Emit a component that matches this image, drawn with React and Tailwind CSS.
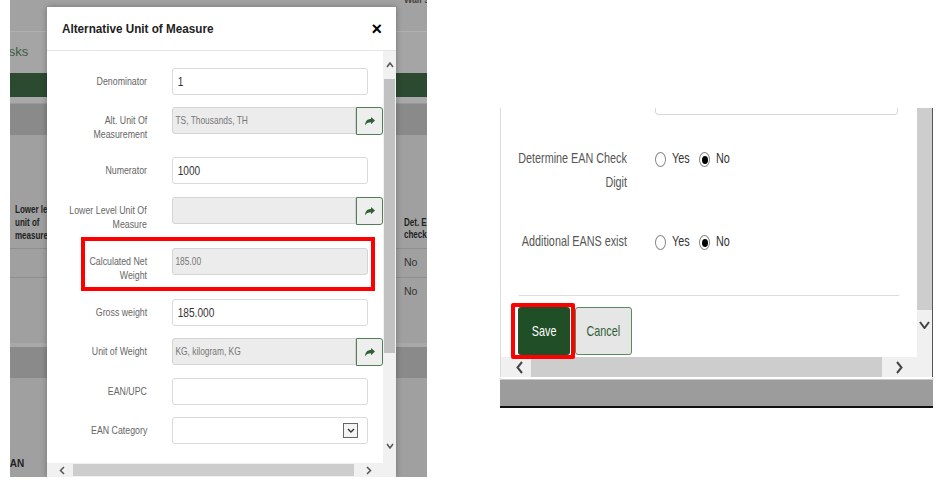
import React from 'react';

const ShareIcon = () => (
  <svg width="10" height="9" viewBox="0 0 10 9">
    <path d="M10 3.6 L6 0 V2 C2.5 2 0.3 4 0 8.5 C1.2 6 3.2 5.3 6 5.3 V7.3 Z" fill="#2f5f33" />
  </svg>
);

const Chevron = ({ dir, w = 8, h = 6, stroke = '#555', sw = 1.5 }) => {
  const paths = {
    up: `M1 ${h - 1} L${w / 2} 1 L${w - 1} ${h - 1}`,
    down: `M1 1 L${w / 2} ${h - 1} L${w - 1} 1`,
    left: `M${w - 1} 1 L1.5 ${h / 2} L${w - 1} ${h - 1}`,
    right: `M1 1 L${w - 1.5} ${h / 2} L1 ${h - 1}`,
  };
  return (
    <svg width={w} height={h} viewBox={`0 0 ${w} ${h}`}>
      <path d={paths[dir]} stroke={stroke} strokeWidth={sw} fill="none" />
    </svg>
  );
};

const Label = ({ lines, w = 'w-[100px]' }) => (
  <div className={`${w} flex shrink-0 flex-col items-end pt-[6px] text-[11px] leading-[14px] text-[#666]`}>
    {lines.map((l) => (
      <span key={l} className="block whitespace-nowrap scale-x-[0.8] origin-right">
        {l}
      </span>
    ))}
  </div>
);

const Field = ({ value = '', disabled, btn, select }) => (
  <div className="ml-[25px] flex shrink-0">
    <div
      className={`${btn ? 'w-[184px] rounded-l-[3px]' : 'w-[196px] rounded-[3px]'} ${
        disabled ? 'border-[#d4d4d4] bg-[#ececec]' : 'border-[#dadada] bg-white'
      } flex h-[27px] items-center justify-between overflow-hidden border`}
    >
      {disabled ? (
        <span className="block whitespace-nowrap pl-[3px] text-[10.5px] text-[#777] scale-x-[0.8] origin-left">
          {value}
        </span>
      ) : (
        <span className="block whitespace-nowrap pl-[6px] text-[13px] text-[#333] scale-x-[0.78] origin-left">
          {value}
        </span>
      )}
      {select && (
        <div className="mr-[9px] flex h-[15px] w-[15px] items-center justify-center border border-[#666] bg-[#f4f4f4]">
          <Chevron dir="down" w={8} h={5} stroke="#333" sw={1.4} />
        </div>
      )}
    </div>
    {btn && (
      <div className="flex h-[28px] w-[27px] items-center justify-center rounded-r-[3px] border border-[#4f7f52] bg-[#eeeeee]">
        <ShareIcon />
      </div>
    )}
  </div>
);

const topRows = [
  { label: ['Denominator'], value: '1', h: 'h-[39px]' },
  { label: ['Alt. Unit Of', 'Measurement'], value: 'TS, Thousands, TH', disabled: true, btn: true, h: 'h-[50px]' },
  { label: ['Numerator'], value: '1000', h: 'h-[40px]' },
  { label: ['Lower Level Unit Of', 'Measure'], value: '', disabled: true, btn: true, h: 'h-[40px]' },
];

const bottomRows = [
  { label: ['Gross weight'], value: '185.000', h: 'h-[39px]' },
  { label: ['Unit of Weight'], value: 'KG, kilogram, KG', disabled: true, btn: true, h: 'h-[40px]' },
  { label: ['EAN/UPC'], value: '', h: 'h-[39px]' },
  { label: ['EAN Category'], value: '', select: true, h: 'h-[40px]' },
];

const Row = ({ r }) => (
  <div className={`flex ${r.h}`}>
    <Label lines={r.label} />
    <Field value={r.value} disabled={r.disabled} btn={r.btn} select={r.select} />
  </div>
);

const Radio = ({ checked }) => (
  <span className="mt-[6px] flex h-[15px] w-[11px] shrink-0 items-center justify-center rounded-[50%] border border-[#8a8a8a] bg-white">
    {checked && <span className="h-[8px] w-[6px] rounded-[50%] bg-black" />}
  </span>
);

const RadioGroup = () => (
  <div className="ml-[28px] flex items-start text-[15px] leading-[24px] text-[#333]">
    <Radio />
    <span className="ml-[6px] inline-block w-[19px] whitespace-nowrap scale-x-[0.72] origin-left">Yes</span>
    <span className="ml-[8px]">
      <Radio checked />
    </span>
    <span className="ml-[6px] inline-block w-[14px] whitespace-nowrap scale-x-[0.72] origin-left">No</span>
  </div>
);

const RightLabel = ({ lines }) => (
  <div className="flex w-[126px] shrink-0 flex-col items-end text-[15px] leading-[24px] text-[#555]">
    {lines.map((l) => (
      <span key={l} className="block whitespace-nowrap scale-x-[0.72] origin-right">
        {l}
      </span>
    ))}
  </div>
);

export default function App() {
  return (
    <div className="flex h-[488px] w-[951px] items-start overflow-hidden bg-white font-['Liberation_Sans',Arial,sans-serif]">
      {/* left screenshot */}
      <div className="relative ml-[10px] flex h-[477px] w-[417px] shrink-0 flex-col overflow-hidden bg-[#a0a0a0]">
        <div className="h-[31px] bg-[#a2a2a2]">
          <div className="ml-auto -mt-[9px] w-[23px] whitespace-nowrap text-[11px] font-bold text-[#444]">
            <span className="block scale-x-[0.8] origin-left">Wall s</span>
          </div>
        </div>
        <div className="h-px bg-[#b0b0b0]" />
        <div className="h-[41px] bg-[#a5a5a5] pt-[13px]">
          <span className="-ml-[15px] block text-[13px] leading-[14px] text-[#3d5c3f]">Tasks</span>
        </div>
        <div className="h-[24px] bg-[#2c4a30]" />
        <div className="h-[7px] border-b border-[#999] bg-[#a9a9a9]" />
        <div className="h-[31px] bg-[#8a8a8a]" />
        <div className="flex h-[113px] items-end justify-between">
          <div className="ml-[5px] whitespace-nowrap pb-[6px] text-[10px] font-bold leading-[13px] text-[#222]">
            <span className="block scale-x-[0.8] origin-left">Lower level</span>
            <span className="block scale-x-[0.8] origin-left">unit of</span>
            <span className="block scale-x-[0.8] origin-left">measure</span>
          </div>
          <div className="w-[23px] whitespace-nowrap pb-[7px] text-[10px] font-bold leading-[12px] text-[#222]">
            <span className="block scale-x-[0.8] origin-left">Det. EAN</span>
            <span className="block scale-x-[0.8] origin-left">check</span>
          </div>
        </div>
        {['No', 'No'].map((t, i) => (
          <div key={i} className="flex h-[29px] items-center justify-end border-t border-[#8f8f8f]">
            <span className="w-[23px] text-[10.5px] text-[#333]">{t}</span>
          </div>
        ))}
        <div className="h-[37px]" />
        <div className="h-[4px] bg-[#a8a8a8]" />
        <div className="h-[31px] bg-[#8a8a8a]" />
        <div className="flex-1 pt-[80px]">
          <span className="-ml-[7px] block text-[10px] font-bold leading-[12px] text-[#222]">EAN</span>
        </div>

        {/* modal */}
        <div className="absolute left-[37px] top-[7px] flex h-[470px] w-[349px] flex-col bg-white shadow-[0_0_6px_rgba(0,0,0,0.3)]">
          <div className="flex h-[44px] shrink-0 items-center justify-between border-b border-[#e5e5e5] pl-[15px] pr-[14px]">
            <span className="block whitespace-nowrap text-[13px] font-bold text-[#222] scale-x-[0.9] origin-left">
              Alternative Unit of Measure
            </span>
            <span className="text-[18px] font-bold leading-none text-black">×</span>
          </div>
          <div className="flex h-[412px] shrink-0">
            <div className="w-[336px] overflow-hidden pt-[17px]">
              {topRows.map((r) => (
                <Row key={r.label[0]} r={r} />
              ))}
              <div className="mb-[8px] ml-[34px] flex h-[54px] w-[294px] border-[4px] border-[#ff0000] pt-[7px]">
                <Label lines={['Calculated Net', 'Weight']} w="w-[62px]" />
                <Field value="185.00" disabled />
              </div>
              {bottomRows.map((r) => (
                <Row key={r.label[0]} r={r} />
              ))}
            </div>
            <div className="flex w-[13px] flex-col bg-[#f1f1f1]">
              <div className="flex h-[28px] justify-center pt-[11px]">
                <Chevron dir="up" w={8} h={6} />
              </div>
              <div className="mx-[1px] h-[274px] bg-[#c1c1c1]" />
              <div className="flex flex-1 justify-center pt-[90px]">
                <Chevron dir="down" w={8} h={6} />
              </div>
            </div>
          </div>
          <div className="flex h-[14px] shrink-0 bg-[#f1f1f1]">
            <div className="flex w-[26px] items-center justify-center pl-[4px]">
              <Chevron dir="left" w={6} h={9} />
            </div>
            <div className="my-[1px] w-[281px] bg-[#cdcdcd]" />
            <div className="flex w-[29px] items-center justify-center">
              <Chevron dir="right" w={6} h={9} />
            </div>
          </div>
        </div>
      </div>

      {/* right screenshot */}
      <div className="ml-[73px] mt-[108px] w-[433px] shrink-0">
        <div className="flex h-[249px]">
          <div className="w-[417px] border-l border-[#dcdcdc] bg-white">
            <div className="ml-[154px] h-[7px] w-[243px] rounded-b-[4px] border border-t-0 border-[#d8d8d8]" />
            <div className="mt-[31px] flex">
              <RightLabel lines={['Determine EAN Check', 'Digit']} />
              <RadioGroup />
            </div>
            <div className="mt-[35px] flex">
              <RightLabel lines={['Additional EANS exist']} />
              <RadioGroup />
            </div>
            <div className="ml-[18px] mt-[42px] h-px w-[380px] bg-[#dddddd]" />
            <div className="ml-[17px] mt-[11px] flex">
              <div className="relative">
                <button className="flex h-[48px] w-[52px] items-center justify-center rounded-[3px] bg-[#1f4e27] text-[15px] text-white">
                  <span className="inline-block scale-x-[0.72]">Save</span>
                </button>
                <div className="absolute -bottom-[4px] -left-[7px] -right-[5px] -top-[4px] z-10 rounded-[2px] border-[4px] border-[#ff0000]" />
              </div>
              <button className="ml-[5px] flex h-[48px] w-[57px] items-center justify-center rounded-[3px] border border-[#5a8a5c] bg-[#e6e6e6] text-[15px] text-[#2e5e33]">
                <span className="inline-block scale-x-[0.72]">Cancel</span>
              </button>
            </div>
          </div>
          <div className="flex w-[15px] flex-col">
            <div className="h-[202px] bg-[#cdcdcd]" />
            <div className="flex flex-1 justify-center bg-[#f0f0f0] pt-[11px]">
              <Chevron dir="down" w={11} h={8} stroke="#444" sw={2} />
            </div>
          </div>
          <div className="w-px bg-[#555]" />
        </div>
        <div className="flex h-[20px]">
          <div className="flex w-[417px] border-l border-[#dcdcdc] bg-[#f0f0f0]">
            <div className="flex w-[30px] items-center justify-center pl-[6px]">
              <Chevron dir="left" w={7} h={13} stroke="#444" sw={2} />
            </div>
            <div className="w-[351px] bg-[#cdcdcd]" />
            <div className="flex flex-1 items-center justify-center">
              <Chevron dir="right" w={7} h={13} stroke="#444" sw={2} />
            </div>
          </div>
          <div className="w-[15px] bg-[#f0f0f0]" />
          <div className="w-px bg-[#555]" />
        </div>
        <div className="h-[3px] rounded-b-[3px] border-b border-[#c8c8c8] bg-white shadow-[0_1px_2px_rgba(0,0,0,0.3)]" />
        <div className="h-[26px] bg-[#9c9c9c]" />
        <div className="h-[2px] bg-[#111]" />
      </div>
    </div>
  );
}
